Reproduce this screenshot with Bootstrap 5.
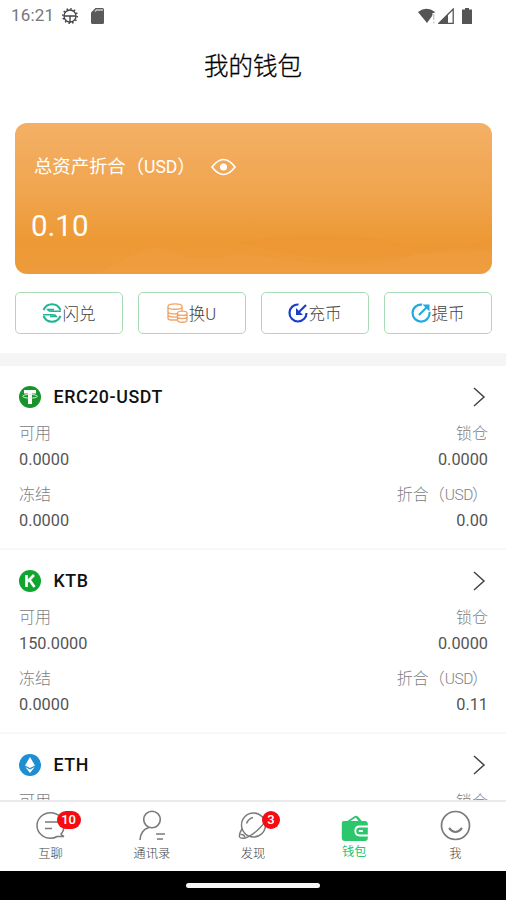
<!DOCTYPE html>
<html lang="zh-CN">
<head>
<meta charset="utf-8">
<meta name="viewport" content="width=device-width, initial-scale=1">
<title>我的钱包</title>
<link href="https://cdn.jsdelivr.net/npm/bootstrap@5.3.0/dist/css/bootstrap.min.css" rel="stylesheet">
<style>
body{font-family:Roboto,"Noto Sans CJK SC",sans-serif;color:#333;background:#fff}
svg{display:block;flex:none}
.screen{height:900px}
.status{height:32px;padding:0 34px 0 11px;font-size:17px;color:#777}
.clock{letter-spacing:.2px;width:51px}
.sd{margin-left:13px}
.signal{margin-left:1px}
.battery{margin-left:8px}
.page-title{height:66px;font-size:24.5px;line-height:69px;font-weight:300;color:#000;-webkit-text-stroke:.3px #000}
.asset{height:151px;margin:25px 14px 0 15px;border-radius:12px;background:linear-gradient(#f4b066,#f0a54f 45%,#ed9935 78%,#ed9b3c)}
.asset-label{font-size:18.4px;line-height:24px;padding:32px 0 0 19px}
.asset-label small{font-size:17.6px}
.asset-label span{margin-right:15px;letter-spacing:-.05px}
.asset-sum{font-size:29.5px;line-height:36px;padding:29px 0 0 16px}
.wave{left:0;bottom:0}
.actions{margin:18px 14px 0 15px;gap:15px}
.act{height:42px;border:1.3px solid #a8dcb6;border-radius:5px;font-size:16.5px;line-height:24px;font-weight:300;color:#444;gap:1px;padding:0 1px 0 0;flex:1 1 0}
.act span{padding-top:4px}
.act:hover{border-color:#6cc788}
.band{height:13px;margin-top:19px;background:#f5f5f5}
.coin{height:184px;padding:19px 18px 0 19px;border-bottom:2px solid #f8f8f8}
.coin-name{font-size:17.8px;line-height:24px;font-weight:500;color:#111;letter-spacing:.6px;margin-left:12.5px}
.chev{margin-right:1px}
.k{font-size:16px;line-height:24px;font-weight:300;color:#808080;padding-top:1px}
.k small{font-size:15.5px;letter-spacing:-.4px;margin-right:-1px}
.v{font-size:16.3px;line-height:24px;color:#555;margin-top:2px}
.pair{margin-top:12px}
.pair + .pair{margin-top:10px}
.tabs{height:71px;border-top:2px solid #eaeaea;background:#fff}
.tab{font-size:12.3px;line-height:16px;font-weight:300;color:#444;padding-top:8px}
.tab span{margin-top:2px}
.tab.active{color:#2cc66d;font-weight:400}
.tab.active span{margin-top:0}
.count{left:26px;top:1px;min-width:18px;height:18px;padding:0 4px;border-radius:9px;background:#f60b12;color:#fff;font-size:13px;line-height:18px;font-weight:500;text-align:center}
.count.wide{min-width:24px;left:23px}
.home{height:29px;background:#000}
.home i{width:134px;height:5px;border-radius:3px;background:#f5f5f5}
</style>
<script src="https://cdn.jsdelivr.net/npm/bootstrap@5.3.0/dist/js/bootstrap.bundle.min.js"></script>
</head>
<body>
<div class="screen d-flex flex-column overflow-hidden">
  <div class="status d-flex align-items-center flex-shrink-0">
    <span class="clock">16:21</span>
    <svg width="16" height="18" viewBox="0 0 16 18" fill="none" stroke="#444"><circle cx="8" cy="9" r="6" stroke-width="1.300"/><circle cx="8" cy="9" r="7.200" stroke-dasharray="1.500 2.270" stroke-width="1.600"/><path d="M2 9h12M8 9v7" stroke-width="1.400"/></svg>
    <svg class="sd" width="13" height="16" viewBox="0 0 13 16"><path d="M4.500 0H11.500Q13 0 13 1.500V14.500Q13 16 11.500 16H1.500Q0 16 0 14.500V4.500z" fill="#5a5a5a"/><path d="M4 3.500L5.500 2H12" stroke="#ccc" stroke-width="1.400" fill="none"/></svg>
    <div class="ms-auto d-flex align-items-center">
      <svg width="19" height="16" viewBox="0 0 19 16"><path d="M0 4Q8.500-2.500 17 4L9 15z" fill="#555"/><path d="M15.700 5v11" stroke="#fff" stroke-width="2.500"/><path d="M15.700 6v6M15.700 13.500v2" stroke="#ccc" stroke-width="1.500"/></svg>
      <svg class="signal" width="16" height="16" viewBox="0 0 16 16"><path d="M1 15.300L15.200 1V15.300z" fill="none" stroke="#555" stroke-width="1.300"/><path d="M0 16L10 6v10z" fill="#555"/></svg>
      <svg class="battery" width="10" height="16" viewBox="0 0 10 16"><path d="M3 0h4v1.500h3V16H0V1.500h3z" fill="#555"/></svg>
    </div>
  </div>
  <h1 class="page-title text-center m-0 flex-shrink-0">我的钱包</h1>

  <section class="asset position-relative overflow-hidden text-white flex-shrink-0">
    <svg class="wave position-absolute" width="477" height="48" viewBox="0 0 477 48"><path d="M76 48Q100 40 118 29Q136 16 158 26Q180 38 225 28Q260 32 300 37Q365 42 400 28Q440 20 477 24V48z" fill="#eea349" opacity=".32"/><path d="M225 17Q300-1 390 18Q430 24 477 13V25Q425 26 378 31Q310 40 225 17z" fill="#e9912c" opacity=".14"/></svg>
    <div class="asset-label position-relative d-flex align-items-center"><span>总资产折合（<small>USD</small>）</span>
      <svg width="25" height="18" viewBox="0 0 25 18" fill="none" stroke="#fff" stroke-width="1.700"><path d="M1 9Q12.500-6 24 9Q12.500 24 1 9z"/><circle cx="12.500" cy="9" r="3.600" fill="#fff" stroke="none"/></svg>
    </div>
    <div class="asset-sum position-relative">0.10</div>
  </section>

  <div class="actions d-flex flex-shrink-0">
    <button class="act btn d-flex align-items-center justify-content-center"><svg width="20" height="20" viewBox="0 0 20 20" fill="none" stroke="#20b394" stroke-width="2"><path d="M1.500 7Q4 1.200 10 1.200T18.500 7M1.500 13Q4 18.800 10 18.800T18.500 13"/><path d="M19 8.300H9Q6.500 8.300 5.500 6.500H12M1 11.700H11Q13.500 11.700 14.500 13.500H8" stroke-width="1.500"/></svg><span>闪兑</span></button>
    <button class="act btn d-flex align-items-center justify-content-center"><svg width="21" height="20" viewBox="0 0 21 20" fill="none" stroke="#f0a669" stroke-width="1.400"><path d="M10 17H4Q1 17 1 15V3.500C1 0 15 0 15 3.500V8M1 4C1 7 15 7 15 4M1 8.500C1 11 6 11 10 10.700M1 12.500Q3 14.500 10 14"/><path d="M10.500 10C10.500 7.500 20 7.500 20 10V17C20 20 10.500 20 10.500 17zM10.500 10.500C10.500 13 20 13 20 10.500M10.500 14C10.500 16 20 16 20 14"/></svg><span>换U</span></button>
    <button class="act btn d-flex align-items-center justify-content-center"><svg width="20" height="20" viewBox="0 0 20 20" fill="none" stroke="#193dcc" stroke-width="2.200"><path d="M10.500 1.500A8.500 8.500 0 1 0 18.500 10"/><path d="M18 2L10 10"/><path d="M8 5v7h7z" fill="#193dcc" stroke="none"/></svg><span>充币</span></button>
    <button class="act btn d-flex align-items-center justify-content-center"><svg width="20" height="20" viewBox="0 0 20 20" fill="none" stroke="#25a9df" stroke-width="2.200"><path d="M11 1.600A8.500 8.500 0 1 0 18.500 9"/><path d="M8 12L17 3"/><path d="M11.500 1.500H18.500V8.500z" fill="#25a9df" stroke="none"/></svg><span>提币</span></button>
  </div>
  <div class="band flex-shrink-0"></div>

  <main class="flex-fill overflow-hidden">
    <article class="coin">
      <div class="d-flex align-items-center"><svg width="22" height="22" viewBox="0 0 22 22"><circle cx="11" cy="11" r="11" fill="#18942a"/><path d="M5 4h12v3.500h-4V18H9V7.500H5z" fill="#fff"/><ellipse cx="11" cy="10.300" rx="7.300" ry="1.900" fill="none" stroke="#d9f0dd" stroke-width="1"/></svg><span class="coin-name">ERC20-USDT</span>
        <svg class="chev ms-auto" width="16" height="22" viewBox="0 0 16 22"><path d="M3 2l10 9-10 9" fill="none" stroke="#444" stroke-width="1.500"/></svg></div>
      <div class="pair d-flex justify-content-between"><div><div class="k">可用</div><div class="v">0.0000</div></div><div class="text-end"><div class="k">锁仓</div><div class="v">0.0000</div></div></div>
      <div class="pair d-flex justify-content-between"><div><div class="k">冻结</div><div class="v">0.0000</div></div><div class="text-end"><div class="k">折合（<small>USD</small>）</div><div class="v">0.00</div></div></div>
    </article>
    <article class="coin">
      <div class="d-flex align-items-center"><svg width="22" height="22" viewBox="0 0 22 22"><circle cx="11" cy="11" r="11" fill="#0fa52f"/><path d="M7.500 5v12M15 5l-6.500 6.500M10.500 10l5 7" fill="none" stroke="#fff" stroke-width="2.700"/></svg><span class="coin-name">KTB</span>
        <svg class="chev ms-auto" width="16" height="22" viewBox="0 0 16 22"><path d="M3 2l10 9-10 9" fill="none" stroke="#444" stroke-width="1.500"/></svg></div>
      <div class="pair d-flex justify-content-between"><div><div class="k">可用</div><div class="v">150.0000</div></div><div class="text-end"><div class="k">锁仓</div><div class="v">0.0000</div></div></div>
      <div class="pair d-flex justify-content-between"><div><div class="k">冻结</div><div class="v">0.0000</div></div><div class="text-end"><div class="k">折合（<small>USD</small>）</div><div class="v">0.11</div></div></div>
    </article>
    <article class="coin">
      <div class="d-flex align-items-center"><svg width="22" height="22" viewBox="0 0 22 22"><circle cx="11" cy="11" r="11" fill="#1d8ed2"/><path d="M11 3l5 8.500-5 2.500-5-2.500zM6.300 13l4.700 2.400 4.700-2.400L11 19z" fill="#fff"/></svg><span class="coin-name">ETH</span>
        <svg class="chev ms-auto" width="16" height="22" viewBox="0 0 16 22"><path d="M3 2l10 9-10 9" fill="none" stroke="#444" stroke-width="1.500"/></svg></div>
      <div class="pair d-flex justify-content-between"><div><div class="k">可用</div></div><div class="text-end"><div class="k">锁仓</div></div></div>
    </article>
  </main>

  <nav class="tabs d-flex flex-shrink-0">
    <div class="tab col d-flex flex-column align-items-center"><div class="position-relative"><svg width="34" height="34" viewBox="0 0 34 34" fill="none" stroke="#7a7a7a" stroke-width="1.500"><path d="M27 24Q30 21 30 15.500A13.500 12.800 0 1 0 16.500 28.300Q20 28.300 23 26.500L30 26.500Q27.500 25.500 27 24zM11 12h13M11 18.500h7"/></svg><b class="count wide position-absolute">10</b></div><span>互聊</span></div>
    <div class="tab col d-flex flex-column align-items-center"><svg width="34" height="34" viewBox="0 0 34 34" fill="none" stroke="#7a7a7a" stroke-width="1.600"><circle cx="17" cy="9.500" r="8.300"/><path d="M5 30Q5.500 20 14 17.500M21 24h9M22 29h6"/></svg><span>通讯录</span></div>
    <div class="tab col d-flex flex-column align-items-center"><div class="position-relative"><svg width="34" height="34" viewBox="0 0 34 34" fill="none" stroke="#7a7a7a" stroke-width="1.400"><circle cx="17.500" cy="15" r="12"/><path d="M6 19Q2 25 4 27.500Q9 30.500 20 21.500Q30 13 30 8M4.500 24.500Q8 24 9 27M10.500 13.500Q12 9 17 7.500"/></svg><b class="count position-absolute">3</b></div><span>发现</span></div>
    <div class="tab active col d-flex flex-column align-items-center"><svg width="34" height="34" viewBox="0 0 34 34"><g transform="translate(.8 1)"><path d="M8 11L17 5Q19 4 20.500 6L25 11" fill="#2cc66d"/><path d="M12 10.500l6-4 3 4z" fill="#fff"/><path d="M6 10H27Q30 10 30 13V27Q30 30 27 30H7Q4 30 4 27V12Q4 10 6 10z" fill="#2cc66d"/><path d="M31 15.500H22Q17.500 15.500 17.500 20T22 24.500H31" fill="none" stroke="#fff" stroke-width="1.800"/><path d="M21 20h4" stroke="#fff" stroke-width="2"/></g></svg><span>钱包</span></div>
    <div class="tab col d-flex flex-column align-items-center"><svg width="34" height="34" viewBox="0 0 34 34" fill="none" stroke="#7a7a7a" stroke-width="1.700"><circle cx="17.500" cy="15.500" r="14"/><path d="M11 18Q17.500 26 24 18" stroke-width="2"/></svg><span>我</span></div>
  </nav>
  <div class="home d-flex align-items-center justify-content-center flex-shrink-0"><i></i></div>
</div>
</body>
</html>
